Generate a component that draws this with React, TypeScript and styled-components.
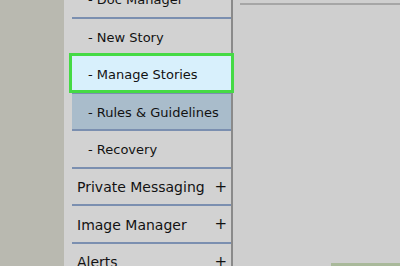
import React from 'react';
import styled, { createGlobalStyle } from 'styled-components';

const Global = createGlobalStyle`
  html, body { margin: 0; padding: 0; width: 400px; height: 266px; overflow: hidden; background: #cfcfcf; }
  #root { height: 266px; }
`;

const Page = styled.div`
  display: flex;
  height: 266px;
  overflow: hidden;
  font-family: "DejaVu Sans", Verdana, sans-serif;
`;

const Gutter = styled.div`
  width: 64px;
  flex: none;
  background: #b9b9b0;
`;

const Sidebar = styled.aside`
  width: 159px;
  flex: none;
  padding-left: 8px;
  background: #d2d2d2;
  border-right: 2px solid #8a8a8a;
`;

const Menu = styled.ul`
  list-style: none;
  margin: -19px 0 0;
  padding: 0;
`;

const Item = styled.li<{ $sub?: boolean; $active?: boolean }>`
  position: relative;
  display: flex;
  align-items: center;
  justify-content: space-between;
  box-sizing: border-box;
  height: 37.5px;
  border-bottom: 2px solid #7b8fb0;
  padding: 2px 4px 0 ${p => (p.$sub ? 16 : 5)}px;
  font-size: ${p => (p.$sub ? 13 : 14)}px;
  color: #121212;
  background: ${p => (p.$active ? '#a9bccb' : 'transparent')};
`;

const Label = styled.span`
  position: relative;
  z-index: 1;
  white-space: nowrap;
`;

const Plus = styled.span`
  position: relative;
  z-index: 1;
  font-size: 15px;
  line-height: 1;
`;

const Highlight = styled.span`
  position: absolute;
  left: -3px;
  right: -3px;
  top: -3px;
  bottom: -1px;
  border: 3px solid #45da45;
  background: #d8f0fc;
  z-index: 0;
`;

const Main = styled.main`
  flex: 1;
  margin-left: 7px;
  margin-top: 3px;
  border-top: 2px solid #a6a6a6;
  display: flex;
  flex-direction: column;
  overflow: hidden;
`;

const Body = styled.div`
  flex: none;
  height: 258px;
`;

const FooterButton = styled.div`
  align-self: flex-end;
  width: 69px;
  height: 24px;
  flex: none;
  background: #a9b99a;
`;

type Entry = { label: string; sub?: boolean; active?: boolean; highlight?: boolean; plus?: boolean };

const entries: Entry[] = [
  { label: '- Doc Manager', sub: true },
  { label: '- New Story', sub: true },
  { label: '- Manage Stories', sub: true, highlight: true },
  { label: '- Rules & Guidelines', sub: true, active: true },
  { label: '- Recovery', sub: true },
  { label: 'Private Messaging', plus: true },
  { label: 'Image Manager', plus: true },
  { label: 'Alerts', plus: true },
];

export default function App() {
  return (
    <>
      <Global />
      <Page>
        <Gutter />
        <Sidebar>
          <Menu>
            {entries.map(e => (
              <Item key={e.label} $sub={e.sub} $active={e.active}>
                {e.highlight && <Highlight />}
                <Label>{e.label}</Label>
                {e.plus && <Plus>+</Plus>}
              </Item>
            ))}
          </Menu>
        </Sidebar>
        <Main>
          <Body />
          <FooterButton />
        </Main>
      </Page>
    </>
  );
}
